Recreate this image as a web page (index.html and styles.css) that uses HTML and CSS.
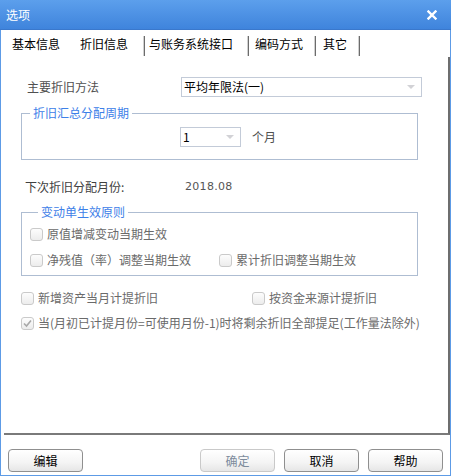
FILE: index.html
```html
<!DOCTYPE html>
<html lang="zh-CN">
<head>
<meta charset="utf-8">
<title>选项</title>
<link rel="stylesheet" href="styles.css">
</head>
<body>
<div class="window">
  <div class="titlebar">
    <span class="title">选项</span>
    <svg class="close" width="10" height="10" viewBox="0 0 10 10"><path d="M1.5 1.5 L8.5 8.5 M8.5 1.5 L1.5 8.5" stroke="#fff" stroke-width="2.4" stroke-linecap="square"/></svg>
  </div>
  <div class="tabs">
    <span class="tab t1">基本信息</span>
    <span class="tab t2 active">折旧信息</span>
    <span class="sep"></span>
    <span class="tab t3">与账务系统接口</span>
    <span class="sep"></span>
    <span class="tab t4">编码方式</span>
    <span class="sep"></span>
    <span class="tab t5">其它</span>
    <span class="sep"></span>
  </div>
  <div class="panel">
    <div class="row method">
      <span class="label">主要折旧方法</span>
      <div class="select wide"><span class="val">平均年限法(一)</span><span class="arrow"></span></div>
    </div>
    <fieldset class="group g1">
      <legend>折旧汇总分配周期</legend>
      <div class="row period">
        <div class="select small"><span class="val">1</span><span class="arrow"></span></div>
        <span class="unit">个月</span>
      </div>
    </fieldset>
    <div class="row next">
      <span class="label2">下次折旧分配月份:</span>
      <span class="date">2018.08</span>
    </div>
    <fieldset class="group g2">
      <legend>变动单生效原则</legend>
      <div class="row chk r1">
        <span class="cb"></span><span class="clabel">原值增减变动当期生效</span>
      </div>
      <div class="row chk r2">
        <span class="cb"></span><span class="clabel w1">净残值（率）调整当期生效</span>
        <span class="cb"></span><span class="clabel">累计折旧调整当期生效</span>
      </div>
    </fieldset>
    <div class="row chk r3">
      <span class="cb"></span><span class="clabel w2">新增资产当月计提折旧</span>
      <span class="cb"></span><span class="clabel">按资金来源计提折旧</span>
    </div>
    <div class="row chk r4">
      <span class="cb checked"><svg width="11" height="11" viewBox="0 0 11 11"><path d="M2 5.5 L4.5 8 L9 2.5" fill="none" stroke="#a8a8a8" stroke-width="1.6"/></svg></span><span class="clabel">当(月初已计提月份=可使用月份-1)时将剩余折旧全部提足(工作量法除外)</span>
    </div>
  </div>
  <div class="footer">
    <button class="btn edit">编辑</button>
    <span class="spacer"></span>
    <button class="btn disabled">确定</button>
    <button class="btn">取消</button>
    <button class="btn">帮助</button>
  </div>
</div>
</body>
</html>
```
FILE: styles.css
```css
* { box-sizing: border-box; }
html, body { margin: 0; padding: 0; background: #fff; }
body {
  font-family: "Noto Sans CJK SC", "Liberation Sans", sans-serif;
  font-size: 12px;
  color: #000;
}
.window {
  width: 451px;
  height: 476px;
  border: 1px solid #5d9be6;
  border-top: none;
  display: flex;
  flex-direction: column;
  background: #fff;
}
.titlebar {
  height: 30px;
  margin: 0 -1px;
  background: linear-gradient(#5c9fec, #3f84dc);
  display: flex;
  align-items: center;
  justify-content: space-between;
  padding: 0 14px 0 6px;
  border-bottom: 1px solid #3a78cc;
}
.title { color: #fff; font-size: 12px; line-height: 14px; }
.close { display: block; margin-top: 1px; }
.tabs {
  height: 27px;
  display: flex;
  align-items: flex-end;
  padding-bottom: 1px;
}
.tab {
  line-height: 16px;
  padding-bottom: 4px;
  white-space: nowrap;
}
.t1 { margin-left: 11px; }
.t2 { margin-left: 20px; margin-right: 15px; }
.t3 { margin-left: 4px; margin-right: 14px; }
.t4 { margin-left: 6px; margin-right: 11px; }
.t5 { margin-left: 7px; margin-right: 11px; }
.sep {
  width: 2px;
  height: 20px;
  border-left: 1px solid #d0d0d0;
  border-right: 1px solid #6c6c6c;
}
.panel {
  flex: 1;
  margin-left: 3px;
  border-right: 2px solid #6e6e6e;
  border-bottom: 2px solid #7a7a7a;
  padding-top: 20px;
  display: flex;
  flex-direction: column;
}
.row { display: flex; align-items: center; }
.method { height: 20px; }
.label { color: #505050; margin-left: 23px; width: 154px; line-height: 16px; }
.select {
  height: 20px;
  border: 1px solid #c3cbd8;
  display: flex;
  align-items: center;
  justify-content: space-between;
  padding: 0 6px 0 2px;
  background: #fff;
}
.select.wide { width: 241px; }
.select.small { width: 61px; margin-left: 158px; }
.val { color: #000; line-height: 16px; }
.arrow {
  width: 0; height: 0;
  border-left: 4px solid transparent;
  border-right: 4px solid transparent;
  border-top: 4px solid #d2d2d6;
}
.group {
  margin: 8px 0 0 17px;
  width: 397px;
  border: 1px solid #aebdd2;
  padding: 0;
  min-width: 0;
}
.group legend {
  color: #3d80e8;
  line-height: 16px;
  margin-left: 8px;
  padding: 0 3px;
}
.g1 .period { padding: 6px 0 12px; }
.unit { color: #505050; margin-left: 11px; line-height: 16px; }
.next { margin-top: 18px; height: 16px; }
.label2 { color: #404040; margin-left: 21px; width: 160px; }
.date { color: #555; font-family: "DejaVu Sans", sans-serif; font-size: 11px; letter-spacing: 0.3px; }
.g2 { margin-top: 10px; padding: 6px 0 7px 8px; }
.chk { height: 16px; }
.g2 .r2 { margin-top: 10px; }
.cb {
  width: 13px;
  height: 13px;
  border: 1px solid #cacaca;
  border-radius: 3px;
  background: linear-gradient(#fdfdfd, #ececec);
  flex: none;
  display: flex;
  align-items: center;
  justify-content: center;
}
.clabel { color: #6a6a6a; margin-left: 4px; line-height: 16px; white-space: nowrap; }
.clabel.w1 { width: 172px; }
.clabel.w2 { width: 214px; }
.r3 { margin-top: 14px; margin-left: 17px; }
.r4 { margin-top: 9px; margin-left: 17px; }
.footer {
  display: flex;
  padding: 14px 7px 0 7px;
  height: 40px;
}
.spacer { flex: 1; }
.btn {
  width: 75px;
  height: 23px;
  border: 1px solid #8f8f8f;
  border-radius: 4px;
  background: linear-gradient(#ffffff, #f4f4f4 60%, #e6e6e6);
  font-family: "Noto Sans CJK SC", sans-serif;
  font-size: 12px;
  color: #000;
  padding: 0;
  margin-left: 9px;
}
.btn.edit { margin-left: 0; }
.btn.disabled { border-color: #c9c9c9; color: #7d8b9c; }
```
